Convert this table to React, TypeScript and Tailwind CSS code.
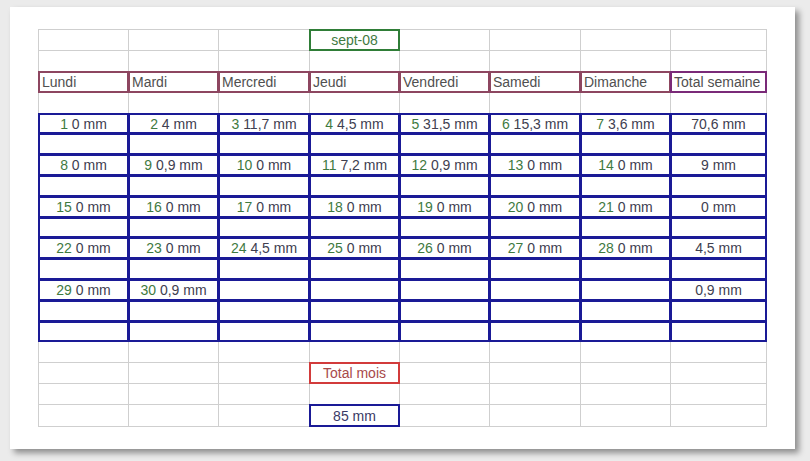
import React from "react";

type BoxColor = "blue" | "head" | "purple" | "green" | "red";

type Cell = {
  day?: string;
  value?: string;
  text?: string;
  box?: BoxColor;
  align?: "left" | "center";
  tone?: "head" | "green" | "red" | "navy" | "dark";
};

const boxClass: Record<BoxColor, string> = {
  blue: "absolute -inset-px border-2 border-[#1a1a96]",
  head: "absolute -inset-px border-2 border-[#8d4660]",
  purple: "absolute -inset-px border-2 border-[#7a2a78]",
  green: "absolute -inset-px border-2 border-[#2f7d37]",
  red: "absolute -inset-px border-2 border-[#d23b3b]",
};

const toneClass: Record<string, string> = {
  head: "text-[#505050]",
  green: "text-[#3f7a3f]",
  red: "text-[#a84a4a]",
  navy: "text-[#3a3a66]",
  dark: "text-[#404050]",
};

const empty = (): Cell[] => Array.from({ length: 8 }, () => ({}));
const blueEmpty = (): Cell[] => Array.from({ length: 8 }, () => ({ box: "blue" as BoxColor }));

const week = (items: Array<[string, string] | null>, total: string): Cell[] => [
  ...items.map((it) =>
    it ? { day: it[0], value: it[1], box: "blue" as BoxColor } : { box: "blue" as BoxColor }
  ),
  { text: total, box: "blue", tone: "dark", align: "center" },
];

const headers = ["Lundi", "Mardi", "Mercredi", "Jeudi", "Vendredi", "Samedi", "Dimanche", "Total semaine"];

const rows: Cell[][] = [
  (() => {
    const r = empty();
    r[3] = { text: "sept-08", box: "green", tone: "green", align: "center" };
    return r;
  })(),
  empty(),
  headers.map((h, i) => ({ text: h, box: i === 7 ? "purple" : "head", tone: "head", align: "left" } as Cell)),
  empty(),
  week(
    [
      ["1", "0 mm"],
      ["2", "4 mm"],
      ["3", "11,7 mm"],
      ["4", "4,5 mm"],
      ["5", "31,5 mm"],
      ["6", "15,3 mm"],
      ["7", "3,6 mm"],
    ],
    "70,6 mm"
  ),
  blueEmpty(),
  week(
    [
      ["8", "0 mm"],
      ["9", "0,9 mm"],
      ["10", "0 mm"],
      ["11", "7,2 mm"],
      ["12", "0,9 mm"],
      ["13", "0 mm"],
      ["14", "0 mm"],
    ],
    "9 mm"
  ),
  blueEmpty(),
  week(
    [
      ["15", "0 mm"],
      ["16", "0 mm"],
      ["17", "0 mm"],
      ["18", "0 mm"],
      ["19", "0 mm"],
      ["20", "0 mm"],
      ["21", "0 mm"],
    ],
    "0 mm"
  ),
  blueEmpty(),
  week(
    [
      ["22", "0 mm"],
      ["23", "0 mm"],
      ["24", "4,5 mm"],
      ["25", "0 mm"],
      ["26", "0 mm"],
      ["27", "0 mm"],
      ["28", "0 mm"],
    ],
    "4,5 mm"
  ),
  blueEmpty(),
  week([["29", "0 mm"], ["30", "0,9 mm"], null, null, null, null, null], "0,9 mm"),
  blueEmpty(),
  blueEmpty(),
  empty(),
  (() => {
    const r = empty();
    r[3] = { text: "Total mois", box: "red", tone: "red", align: "center" };
    return r;
  })(),
  empty(),
  (() => {
    const r = empty();
    r[3] = { text: "85 mm", box: "blue", tone: "navy", align: "center" };
    return r;
  })(),
];

function CellView({ cell }: { cell: Cell }) {
  const align = cell.align === "left" ? "justify-start pl-[3px]" : "justify-center";
  return (
    <div
      className={`relative flex items-center ${align} border-r border-b border-[#cfcfcf] whitespace-nowrap overflow-visible leading-none`}
    >
      {cell.day !== undefined ? (
        <span className="text-[#404050]">
          <span className="text-[#3f7a3f]">{cell.day}</span> {cell.value}
        </span>
      ) : cell.text ? (
        <span className={toneClass[cell.tone || "dark"]}>{cell.text}</span>
      ) : null}
      {cell.box ? <span className={boxClass[cell.box]} /> : null}
    </div>
  );
}

export default function App() {
  return (
    <div className="w-[810px] h-[461px] bg-[#ebebeb] overflow-hidden" style={{ fontFamily: '"Liberation Sans", Arial, sans-serif' }}>
      <div className="ml-[10px] mt-[7px] w-[785px] h-[442px] bg-white pl-[28px] pt-[22px] shadow-[4px_4px_6px_rgba(0,0,0,0.4)]">
        <div className="grid w-fit grid-cols-[90px_90px_91px_90px_90px_91px_90px_96px] grid-rows-[21px_21px_21px_21px_20px_21px_21px_21px_21px_20px_21px_21px_21px_21px_20px_21px_21px_21px_22px] border-l border-t border-[#cfcfcf] text-[14px]">
          {rows.map((row, ri) =>
            row.map((cell, ci) => <CellView key={`${ri}-${ci}`} cell={cell} />)
          )}
        </div>
      </div>
    </div>
  );
}
